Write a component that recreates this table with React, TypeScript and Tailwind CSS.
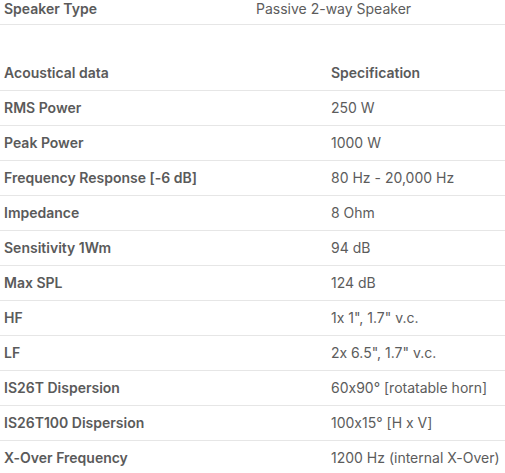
// SpecsTable.tsx

type Spec = { label: string; value: string };

const acoustical: Spec[] = [
  { label: "RMS Power", value: "250 W" },
  { label: "Peak Power", value: "1000 W" },
  { label: "Frequency Response [-6 dB]", value: "80 Hz - 20,000 Hz" },
  { label: "Impedance", value: "8 Ohm" },
  { label: "Sensitivity 1Wm", value: "94 dB" },
  { label: "Max SPL", value: "124 dB" },
  { label: "HF", value: '1x 1", 1.7" v.c.' },
  { label: "LF", value: '2x 6.5", 1.7" v.c.' },
  { label: "IS26T Dispersion", value: "60x90° [rotatable horn]" },
  { label: "IS26T100 Dispersion", value: "100x15° [H x V]" },
  { label: "X-Over Frequency", value: "1200 Hz (internal X-Over)" },
];

const SpecRow = ({ label, value, header }: Spec & { header?: boolean }) => (
  <div className="flex h-[35px] items-center border-b border-[#e6e6e6]">
    <div className="w-[331px] shrink-0 pl-[4px] font-semibold text-[#5a5a5a]">
      {label}
    </div>
    <div
      className={
        header
          ? "font-semibold text-[#5a5a5a]"
          : "text-[#5c5c5c]"
      }
    >
      {value}
    </div>
  </div>
);

export default function App() {
  return (
    <div className="h-[473px] w-[505px] overflow-hidden bg-white font-['Inter','Liberation_Sans',sans-serif] text-[14px] leading-[18px] [font-feature-settings:'calt'_0]">
      {/* general */}
      <div className="flex border-b border-[#e6e6e6] pb-[6px]">
        <div className="w-[256px] shrink-0 pl-[4px] font-semibold text-[#5a5a5a]">
          Speaker Type
        </div>
        <div className="text-[#5c5c5c]">Passive 2-way Speaker</div>
      </div>

      {/* acoustical data */}
      <div className="mt-[31px]">
        <SpecRow label="Acoustical data" value="Specification" header />
        {acoustical.map((s) => (
          <SpecRow key={s.label} label={s.label} value={s.value} />
        ))}
      </div>
    </div>
  );
}
